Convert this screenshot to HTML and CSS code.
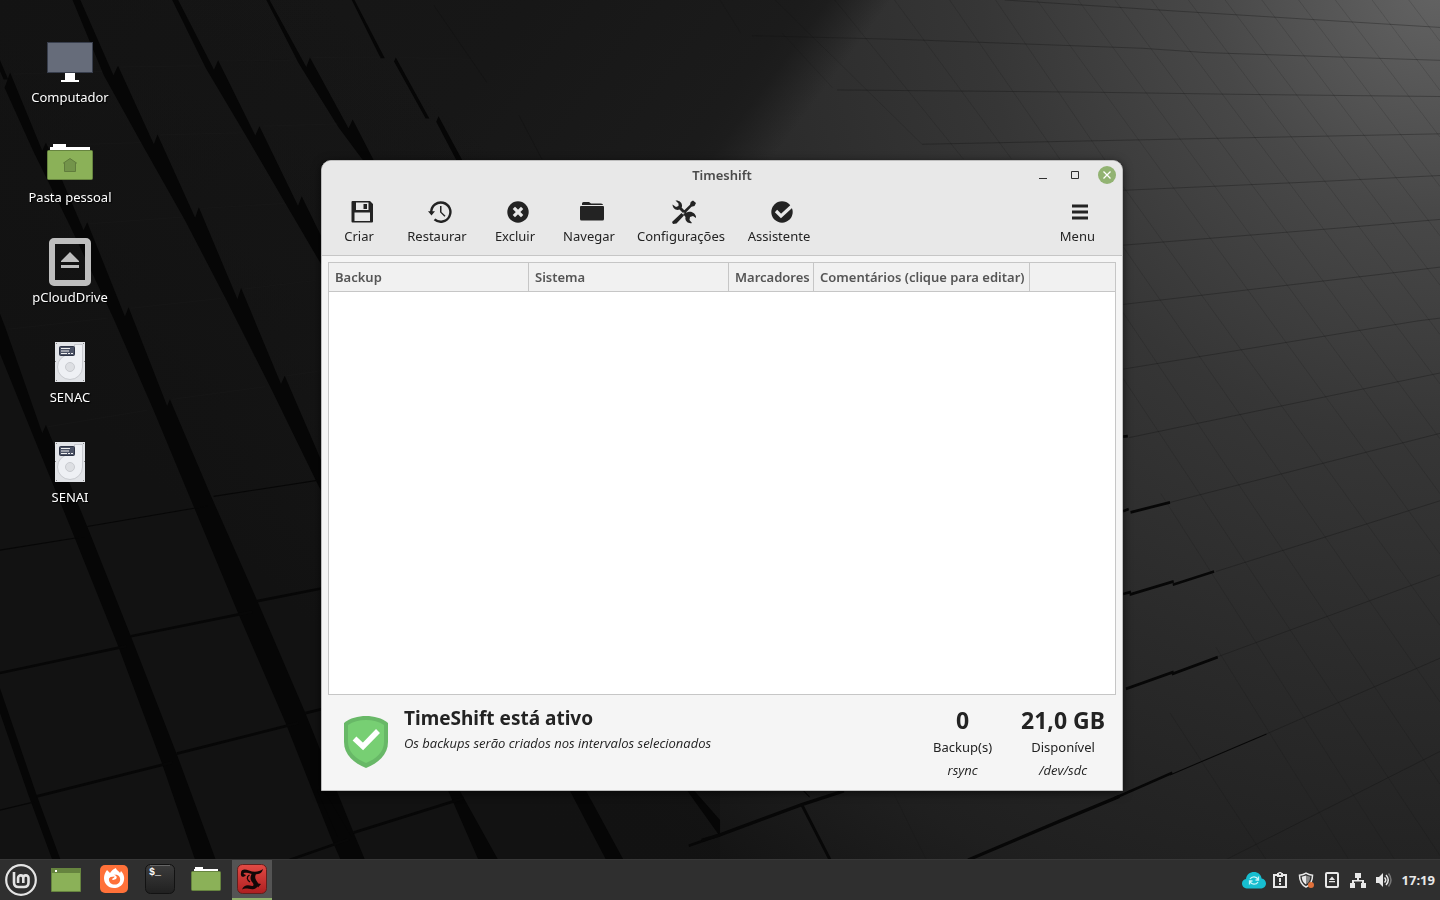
FILE: index.html
```html
<!DOCTYPE html>
<html lang="pt-BR">
<head>
<meta charset="utf-8">
<title>Timeshift</title>
<link rel="stylesheet" href="styles.css">
</head>
<body>
<svg class="wallpaper" viewBox="0 0 1440 900" preserveAspectRatio="xMidYMid slice" aria-hidden="true">
  <defs>
    <radialGradient id="light" gradientUnits="userSpaceOnUse" cx="1440" cy="-20" r="1150">
      <stop offset="0" stop-color="#646464"/>
      <stop offset=".2" stop-color="#484848"/>
      <stop offset=".4" stop-color="#363636"/>
      <stop offset=".62" stop-color="#2a2a2a"/>
      <stop offset=".85" stop-color="#1f1f1f"/>
      <stop offset="1" stop-color="#131313"/>
    </radialGradient>
    <linearGradient id="shade" gradientUnits="userSpaceOnUse" x1="0" y1="0" x2="570" y2="428">
      <stop offset="0" stop-color="#141414"/>
      <stop offset=".6" stop-color="#171717"/>
      <stop offset=".9" stop-color="#1b1b1b"/>
      <stop offset=".93" stop-color="#1b1b1b" stop-opacity=".9"/>
      <stop offset="1" stop-color="#1b1b1b" stop-opacity="0"/>
    </linearGradient>
    <linearGradient id="corner" gradientUnits="userSpaceOnUse" x1="560" y1="200" x2="240" y2="560">
      <stop offset="0" stop-color="#121212" stop-opacity="0"/>
      <stop offset="1" stop-color="#121212"/>
    </linearGradient>
    <filter id="edge" color-interpolation-filters="sRGB"><feGaussianBlur stdDeviation="1"/></filter>
  </defs>
  <rect width="1440" height="900" fill="url(#light)"/>
  <rect width="1440" height="900" fill="url(#shade)"/>
  <rect width="720" height="900" fill="url(#corner)"/>
  <g transform="scale(.4592 .5485)">
    <g fill="#060606" filter="url(#edge)">
      <path d="M158 0H175L247 137L257 120L335 263L343 245L425 397L433 378L517 545L525 525L612 700L620 685L705 850V905L590 708L495 550L403 402L312 267L226 137z"/>
      <path d="M375 0H388L466 127L475 110L556 247L565 230L649 375L657 358L705 440V490L624 374L534 245L448 124z"/>
      <path d="M580 0H587L667 122L675 105L759 234L768 218L815 294H792L737 232L650 115z"/>
      <path d="M766 0H772L838 106h-9zM862 105L935 216h-8L858 112zM955 212L1008 294h-13L950 222z"/>
      <path d="M22 132L92 275L100 260L182 420L190 405L272 577L280 560L364 740L370 728L460 905L560 1095L665 1300L770 1518L795 1568H742L722 1530L622 1318L517 1115L420 920L334 747L247 580L157 420L72 275L10 160z"/>
      <path d="M0 572L12 598L92 790L100 775L190 960L285 1160L385 1375L470 1568H425L352 1390L256 1175L160 975L70 790L0 645z"/>
      <path d="M0 1255L80 1450L132 1568H114L62 1450L0 1300zM0 110L18 145H8L0 130z"/>
      <path d="M705 1440L765 1525H735L690 1440zM1000 1440L1085 1568H1042L975 1440zM1275 1440L1358 1568H1320L1240 1440zM1510 1440L1568 1495V1525L1495 1440z"/>
    </g>
    <g fill="none" stroke="#070707" stroke-width="5" filter="url(#edge)">
      <path d="M0 1227L275 1178M285 1160L550 1115M560 1096L705 1072M80 1452L375 1390M385 1374L650 1318M665 1300L705 1292M770 1518L1010 1455M630 1568L760 1530M1500 1542L1568 1522"/>
      <path stroke-width="2" d="M0 1003L185 978M190 960L455 922M465 905L705 874M0 1477L75 1462"/>
    </g>
    <g fill="none" stroke="#202020" stroke-width="1.5" opacity=".35">
      <path d="M30 135L222 130M262 122L440 120M480 111L640 110M680 105L830 104M870 105L1030 108M105 265L308 260M348 246L528 242M572 230L735 226M195 408L394 396M438 380L618 371M20 600L235 580M285 562L482 544M530 527L700 510M105 778L320 748M375 728L577 705M625 685L700 676"/>
    </g>
    <path d="M945 10L1060 150M1130 210L1180 290" stroke="#101010" stroke-width="1.5" opacity=".6"/>
  </g>
  <g transform="translate(720) scale(.4592 .5485)" fill="none" stroke="#101010">
    <g opacity=".42" stroke-width="1.5">
      <path d="M620 0L990 20L1568 50M70 65L400 72L920 88L1060 96L1568 110M255 164L800 168L1130 172L1568 176M440 263L1210 250L1568 244M878 347L1280 332L1568 320M878 447L1360 415L1568 400M878 555L1440 500L1568 487M878 673L1520 585L1568 580M890 798L1568 680M980 916L1568 790M1080 1042L1568 913M1085 1197L1568 1048M1190 1338L1568 1200M1100 1568L1568 1370"/>
    </g>
    <g opacity=".22" stroke-width="1.3">
      <path d="M120 0L440 263M250 0L530 290M380 0L635 290M500 0L740 290M600 0L845 300M690 0L1568 1010M780 0L1568 900M860 0L1568 800M940 0L1568 700M1020 0L1568 610M1100 0L1568 520M1180 0L1568 430M1260 0L1568 340M1340 0L1568 250M1420 0L1568 165M1500 0L1568 75M878 340L1568 1140M878 450L1568 1280M878 570L1568 1430M878 690L1568 1560M960 900L1470 1568M1080 1180L1370 1568M980 1300L1190 1568M0 0L45 60M135 60L245 160M380 1450L450 1568"/>
    </g>
    <g stroke="#070707" stroke-width="6" filter="url(#edge)">
      <path d="M-40 1532L0 1522L178 1467L270 1442M178 1467L240 1568M540 1568L740 1497L870 1452"/>
      <path stroke-width="5" d="M894 934L980 916M892 1084L988 1060M986 1066L1076 1042M884 1256L988 1225M984 1229L1084 1198M860 1455L985 1409M878 932L890 928M878 1083L895 1079M878 796L888 795"/>
      <path stroke-width="2" d="M980 1413L1190 1338M180 1440L195 1453"/>
    </g>
  </g>
</svg>

<main class="desktop">
  <nav class="shortcuts" aria-label="Área de trabalho">
    <a class="shortcut" href="#computador">
      <svg width="48" height="48" viewBox="0 0 48 48"><rect x="1.500" y="4.500" width="45" height="30" fill="#666c7a" stroke="#383e4c"/><path fill="#fff" d="M19 35h10v7h4v2H15v-2h4z"/></svg>
      <span>Computador</span>
    </a>
    <a class="shortcut" href="#pessoal">
      <svg width="48" height="48" viewBox="0 0 48 48"><path fill="#fff" d="M4 14V9h3V6h13v3h24v5z"/><rect x="1.500" y="12.500" width="45" height="29" rx="1" fill="#8bb158" stroke="#66843f"/><path d="M24 20.500l6.500 4.500H29.500v8.500h-11V25H17.500z" fill="#73944a" stroke="#607c3c"/></svg>
      <span>Pasta pessoal</span>
    </a>
    <a class="shortcut" href="#pcloud">
      <svg width="48" height="48" viewBox="0 0 48 48"><rect x="6" y="3" width="36" height="42" rx="2" fill="none" stroke="#bebebe" stroke-width="6"/><path fill="#bebebe" d="M24 14l9 9v1H15v-1zM15 27h18v3H15z"/></svg>
      <span>pCloudDrive</span>
    </a>
    <a class="shortcut" href="#senac">
      <svg width="48" height="48" viewBox="0 0 48 48"><use href="#disk"/></svg>
      <span>SENAC</span>
    </a>
    <a class="shortcut" href="#senai">
      <svg width="48" height="48" viewBox="0 0 48 48"><g id="disk"><path fill="#e1e3e7" d="M9 4h30v40H9z"/><path d="M28.500 6.500h8V29a12.500 12.500 0 1 1-12.500-12.500c3 0 4.500-2 4.500-5z" fill="#eef0f4" stroke="#c9cbd0"/><circle cx="24" cy="29" r="4.500" fill="#dddfe3" stroke="#c9cbd0"/><rect x="13.500" y="8.500" width="15" height="9" rx="1" fill="#4c5366" stroke="#2f3546"/><path d="M15 10.500h9M15 13h8M15 15.500h6M22 15.500h2M25 15.500h2" stroke="#eee"/><path fill="#888" d="M10 5h1v1h-1zM37 5h1v1h-1zM9 23h1v1H9zM38 23h1v1h-1zM10 42h1v1h-1zM37 42h1v1h-1z"/></g></svg>
      <span>SENAI</span>
    </a>
  </nav>

  <section class="window" aria-labelledby="window-title">
    <header class="window-head">
      <div class="titlebar">
        <h1 id="window-title">Timeshift</h1>
        <div class="controls">
          <button type="button" aria-label="Minimizar"><svg width="18" height="18" viewBox="0 0 18 18"><path d="M5 12.500h8" stroke="#303030"/></svg></button>
          <button type="button" aria-label="Maximizar"><svg width="18" height="18" viewBox="0 0 18 18"><path d="M5.500 5.500h7v7h-7z" fill="none" stroke="#303030"/></svg></button>
          <button type="button" aria-label="Fechar"><svg width="18" height="18" viewBox="0 0 18 18"><circle cx="9" cy="9" r="9" fill="#92b372"/><path d="M5.500 5.500l7 7m0-7l-7 7" stroke="#fff" stroke-width="1.300"/></svg></button>
        </div>
      </div>
      <div class="toolbar">
        <button type="button"><svg width="24" height="24" viewBox="0 0 24 24"><path fill="#232323" fill-rule="evenodd" d="M2.500 1h17.500l3 3v17.500a1 1 0 0 1-1 1H2.500a1 1 0 0 1-1-1V2a1 1 0 0 1 1-1zM6 2.500v7.500h12.500V2.500zM4.500 12.500v8.500h15.500v-8.500zM13.500 4h3.500v5h-3.500z"/></svg>Criar</button>
        <button type="button"><svg width="24" height="24" viewBox="0 0 24 24"><path d="M3.200 12A9.600 9.600 0 1 1 6.500 19.300" fill="none" stroke="#232323" stroke-width="2.400"/><path fill="#232323" d="M0 11.200h7L3.500 15.500zM12 6h1.500v6l4 3.800-1 1-4.500-4.500z"/></svg>Restaurar</button>
        <button type="button"><svg width="24" height="24" viewBox="0 0 24 24"><circle cx="12" cy="12" r="10.700" fill="#232323"/><path d="M9 9l6 6m0-6l-6 6" stroke="#e8e8e8" stroke-width="3.200" stroke-linecap="square"/></svg>Excluir</button>
        <button type="button"><svg width="24" height="24" viewBox="0 0 24 24"><path fill="#232323" d="M2 3.500Q2 2 3.500 2H9l2 1.500h10q2 0 2 1.500H2zM1 6h22q1 0 1 1v12q0 1.500-1.500 1.500h-21Q0 20.500 0 19V7q0-1 1-1z"/></svg>Navegar</button>
        <button type="button"><svg width="24" height="24" viewBox="0 0 24 24"><path fill="#232323" d="M3.500.500C7 0 10.500 2.500 10 6.500l-.4 1L13 11l-2 2-3.500-3.500C4 11 .500 8 .500 4.500L4 7l2.500-1V3.500zM21 .500L24 3l-1.500 3-3 .8-6.500 6.700-2-2 7-6.800.7-2.700zM9.500 13l2.500 2.500-7.500 8L1 24l-1-2zM13 13l3-1c4-1.500 8.500 2 8 6l-3-2-3 1-.500 3L20 23c-3.500 1-7.500-2-6.500-6L11 14z"/></svg>Configurações</button>
        <button type="button"><svg width="24" height="24" viewBox="0 0 24 24"><circle cx="12" cy="12" r="10.700" fill="#232323"/><path d="M6 11l5 5L23 5" fill="none" stroke="#e8e8e8" stroke-width="3.200"/></svg>Assistente</button>
        <button type="button" class="menu"><svg width="24" height="24" viewBox="0 0 24 24"><path fill="#232323" d="M4 4.500h16v3H4zM4 10.500h16v3H4zM4 16.500h16v3H4z"/></svg>Menu</button>
      </div>
    </header>

    <div class="list">
      <table>
        <colgroup><col class="wide"><col class="wide"><col class="tags"><col class="comments"><col></colgroup>
        <thead><tr><th>Backup</th><th>Sistema</th><th>Marcadores</th><th>Comentários (clique para editar)</th><th></th></tr></thead>
      </table>
    </div>

    <footer class="status">
      <svg class="shield" width="44" height="52" viewBox="0 0 44 52"><path fill="#68b867" d="M22 0C30 0 38 2 44 7v19c0 13-10 21-22 26C10 47 0 39 0 26V7C6 2 14 0 22 0z"/><path fill="#77cf73" d="M22 4c7 0 13 1.500 18 5v17c0 10-8 17-18 21C12 43 4 36 4 26V9c5-3.500 11-5 18-5z"/><path d="M10.500 22.500l8.500 8L34 15" fill="none" stroke="#fff" stroke-width="5.500"/></svg>
      <div class="message"><h2>TimeShift está ativo</h2><p>Os backups serão criados nos intervalos selecionados</p></div>
      <div class="stat"><strong>0</strong><span>Backup(s)</span><em>rsync</em></div>
      <div class="stat"><strong>21,0 GB</strong><span>Disponível</span><em>/dev/sdc</em></div>
    </footer>
  </section>
</main>

<footer class="panel">
  <div class="launchers">
    <button type="button" class="start" aria-label="Menu"><svg width="32" height="32" viewBox="0 0 32 32" fill="none" stroke="#e4e4e4"><circle cx="16" cy="16" r="14.800" stroke-width="2.200"/><path d="M9 8v10.500q0 4.500 4.500 4.500H19q4.500 0 4.500-4.500V14a2.600 2.600 0 0 0-5.200 0v5M18.300 14a2.600 2.600 0 0 0-5.200 0v5" stroke-width="2.600"/></svg></button>
    <button type="button" aria-label="Mostrar área de trabalho"><svg width="30" height="30" viewBox="0 -1 30 30"><path fill="#8bb158" stroke="#66843f" d="M.500 3.500h29v23H.500z"/><path fill="#66843f" d="M0 3h30v5H0z"/><path fill="#fff" d="M4 5h2v2H4z"/></svg></button>
    <button type="button" aria-label="Firefox"><svg width="30" height="30" viewBox="0 -1 30 30"><rect x="1" y="0" width="28" height="28" rx="5" fill="#ff7139"/><path fill="#fff" d="M8 5l3 3c1-1.500 3-4 6-5 0 2 3 3 4 5l1-2c3 3 4 7 2.500 11-1.500 4-5.500 6-9.500 6-6 0-10-4.500-10-10 0-3 1-5 3-8z"/><path fill="#ff7139" d="M11.500 12l4-.5c0 1.500-2 1.500-2.500 3 1 1 3 0 4-.5 2-2-.5-4-2-4 4-1 7 2 6 6-1 3-4 4-6.500 3.500-3-.5-5-3-4.500-6z"/></svg></button>
    <button type="button" aria-label="Terminal"><svg width="30" height="30" viewBox="0 0 30 30"><defs><linearGradient id="term" x2="0" y2="1"><stop stop-color="#3c3c3c"/><stop offset="1" stop-color="#202020"/></linearGradient></defs><rect x=".500" y=".500" width="29" height="29" rx="5" fill="url(#term)" stroke="#121212"/><path d="M5 1.500h20" stroke="#666"/><text x="4" y="11" class="prompt">$_</text></svg></button>
    <button type="button" aria-label="Arquivos"><svg width="30" height="30" viewBox="0 -1 30 30"><path fill="#fff" d="M3 8V4h1V2h8v2h15v4z"/><rect x=".500" y="6.500" width="29" height="19" rx="1" fill="#8bb158" stroke="#66843f"/></svg></button>
    <button type="button" class="active" aria-label="Timeshift"><svg width="30" height="30" viewBox="0 0 30 30"><defs><linearGradient id="ts" x2="0" y2="1"><stop stop-color="#e34b45"/><stop offset="1" stop-color="#ae1f20"/></linearGradient></defs><rect x=".500" y=".500" width="29" height="29" rx="5" fill="url(#ts)" stroke="#61201e"/><path d="M4 9C4 5 8 5 12 6.500C17 8.500 22 8 26 5C25 10 20 11 15 10C10 9 7 8 6.500 10L9 11C7 14 3 13 4 9zM15 9L19 10C17 14 19 16 21 19C22 22 19 24.500 17 25C13 26 9 23 5 25.500C7 20.500 11 20.500 15 22C17 22 17 20 15 18C13 15 13 13 15 9zM19 19l5 1-3 3.500z" fill="#110707"/><path d="M12.500 11C9 13 10 16 13 18" fill="none" stroke="#110707" stroke-width="1.300"/></svg></button>
  </div>
  <div class="tray">
    <button type="button" aria-label="pCloud"><svg width="24" height="24" viewBox="0 0 24 24"><path fill="#17bed0" d="M6 20.500c-3.500 0-6-2-6-5 0-2.500 1.700-4 4-4.500C4.500 6.500 8 4 12 4s7 2.500 7.600 6.500c2.700.5 4.400 2.300 4.400 5 0 3-2.500 5-6 5z"/><path d="M8 11a4.500 4.500 0 0 1 8 .500M16 14a4.500 4.500 0 0 1-8-.500M16.500 8.500v3.500h-3M7.500 16.500V13h3" fill="none" stroke="#c6f3f7" stroke-width="1.300"/></svg></button>
    <button type="button" aria-label="Área de transferência"><svg width="16" height="16" viewBox="0 0 16 16"><path d="M2 3h12v12H2z" fill="none" stroke="#e8e8e8" stroke-width="2"/><path fill="#e8e8e8" d="M5 1h1.500V0h3v1H11v4H5zM7 6h2v4H7zM7 11h2v2H7z"/><path fill="#303030" d="M7 1.500h2v1.500H7z"/></svg></button>
    <button type="button" aria-label="Atualizações"><svg width="16" height="16" viewBox="0 0 16 16"><path d="M8 1.200c2 1.300 4 1.800 6.500 2C14.500 9 13 12.500 8 15 3 12.500 1.500 9 1.500 3.200 4 3 6 2.500 8 1.200z" fill="none" stroke="#e8e8e8" stroke-width="1.500"/><path fill="#e8e8e8" d="M8 3.500v9C5 10.500 4 8.500 3.700 4.800z"/><path fill="#888" d="M8 3.500v9c3-2 4-4 4.300-7.700z"/><circle cx="13" cy="13" r="3" fill="#e0703a"/></svg></button>
    <button type="button" aria-label="Unidades removíveis"><svg width="16" height="16" viewBox="0 0 16 16"><rect x="2" y="1" width="12" height="14" rx="1" fill="none" stroke="#e8e8e8" stroke-width="2"/><path fill="#e8e8e8" d="M8 4.500l3 3.500H5zM5 9h6v1.200H5z"/></svg></button>
    <button type="button" aria-label="Rede"><svg width="16" height="16" viewBox="0 0 16 16"><path fill="#e8e8e8" d="M5 1h6v5H9v2h5v3h2v5h-5v-5h1V9.500H4V11h1v5H0v-5h2V8h5V6H5z"/></svg></button>
    <button type="button" aria-label="Volume"><svg width="16" height="16" viewBox="0 0 16 16"><path fill="#e8e8e8" d="M0 5h3l4-4v14l-4-4H0z"/><path d="M8.500 5.500q2.500 2.500 0 5M10 3q4.500 5 0 10" fill="none" stroke="#e8e8e8" stroke-width="1.500"/><path d="M12.500 1.500q5 6.500 0 13" fill="none" stroke="#777" stroke-width="1.500"/></svg></button>
    <time>17:19</time>
  </div>
</footer>
</body>
</html>
```
FILE: styles.css
```css
* { box-sizing: border-box; }

body {
  margin: 0;
  min-height: 100vh;
  display: flex;
  flex-direction: column;
  background: #141414;
  color: #232323;
  font: 13px/22px "Noto Sans", sans-serif;
}

h1, h2, p { margin: 0; }

button {
  border: 0;
  padding: 0;
  background: none;
  color: inherit;
  font: inherit;
}

svg { display: block; flex: none; }

.wallpaper {
  position: fixed;
  inset: 0;
  z-index: -1;
  width: 100%;
  height: 100%;
}

.desktop { position: relative; flex: 1; }

.shortcuts {
  display: flex;
  flex-direction: column;
  gap: 30px;
  width: 140px;
  padding-top: 38px;
}

.shortcut {
  display: flex;
  flex-direction: column;
  align-items: center;
  color: #fff;
  text-decoration: none;
  text-shadow: 1px 1px 1px #000;
}

.window {
  position: absolute;
  left: 321px;
  top: 160px;
  width: 802px;
  border: 1px solid #bcbcbc;
  border-radius: 10px 10px 0 0;
  overflow: hidden;
  background: #f5f5f5;
  box-shadow: 0 2px 10px rgba(0, 0, 0, .6);
}

.window-head {
  padding-bottom: 7px;
  border-bottom: 1px solid #c6c6c6;
  background: #e8e8e8;
}

.titlebar {
  display: grid;
  grid-template-columns: 1fr auto 1fr;
  align-items: center;
  height: 28px;
  padding: 0 6px;
}

.titlebar h1 {
  grid-column: 2;
  color: #4a4a4a;
  font-size: 13px;
  font-weight: 600;
  line-height: 22px;
}

.controls { display: flex; justify-content: flex-end; gap: 14px; }

.toolbar {
  display: grid;
  grid-template-columns: 74px 82px 74px 74px 110px 86px auto;
  padding: 11px 27px 0 0;
}

.toolbar button {
  display: flex;
  flex-direction: column;
  align-items: center;
  line-height: 24px;
}

.toolbar svg { margin-left: 6px; }
.toolbar .menu { justify-self: end; }

.list {
  min-height: 433px;
  margin: 6px 6px 0;
  border: 1px solid #c6c6c6;
  background: #fff;
}

table { width: 100%; table-layout: fixed; border-spacing: 0; }
.wide { width: 200px; }
.tags { width: 85px; }
.comments { width: 216px; }

th {
  height: 29px;
  padding: 0 6px;
  border-right: 1px solid #c6c6c6;
  border-bottom: 1px solid #c6c6c6;
  background: #f1f1f1;
  color: #555;
  font-weight: 600;
  text-align: left;
  white-space: nowrap;
}

th:last-child { border-right: 0; }

.status {
  display: flex;
  padding: 11px 17px 10px 22px;
}

.shield { margin-top: 10px; }
.message { flex: 1; margin-left: 16px; }
.message h2 { font-size: 19px; line-height: 24px; }
.message p { line-height: 26px; }

.message p, .stat em { font-family: "Open Sans", sans-serif; font-style: italic; }

.stat {
  display: flex;
  flex-direction: column;
  align-items: center;
  margin-left: 29px;
}

.stat strong { font-size: 23px; line-height: 28px; }
.stat span { line-height: 26px; }
.stat em { line-height: 20px; }

.panel {
  display: flex;
  justify-content: space-between;
  height: 41px;
  border-top: 1px solid #383838;
  background: #2f2f2f;
  color: #e8e8e8;
}

.launchers, .tray { display: flex; }
.launchers { gap: 6px; }

.launchers button {
  display: grid;
  place-items: center;
  width: 40px;
  border-bottom: 2px solid transparent;
}

.launchers .start { border: 0; margin-left: 1px; }
.launchers .start + button { margin: 0 2px 0 -1px; }
.launchers .active { background: #545454; border-color: #8fb06a; }

.prompt { fill: #fff; font: bold 10px "Liberation Mono", monospace; }

.tray { align-items: center; padding-right: 5px; }

.tray button {
  display: grid;
  place-items: center;
  width: 26px;
  height: 40px;
}

.tray time { margin-left: 5px; font-weight: bold; }
```
